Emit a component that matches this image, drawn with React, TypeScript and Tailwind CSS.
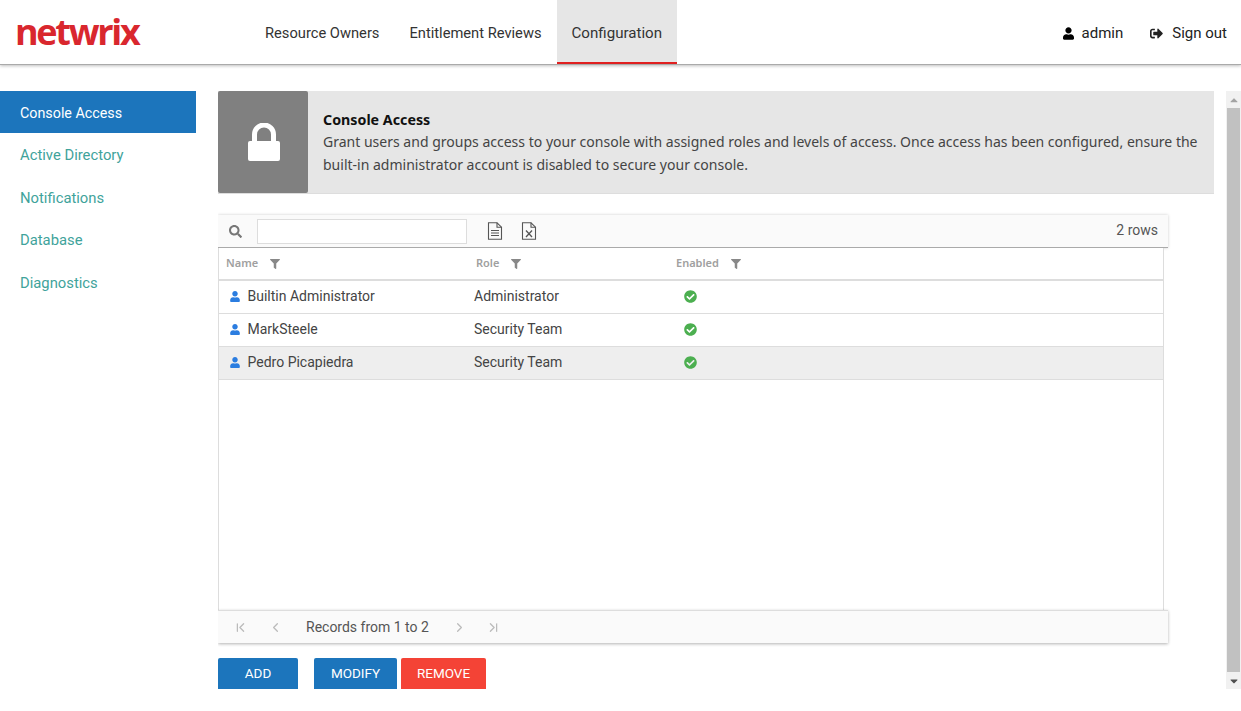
import React from 'react'
import { FaUser, FaSignOutAlt, FaSearch, FaFilter, FaCheckCircle, FaCaretUp, FaCaretDown } from 'react-icons/fa'
import { ChevronFirst, ChevronLast, ChevronLeft, ChevronRight } from 'lucide-react'

const ROWS = [
  { name: 'Builtin Administrator', role: 'Administrator', selected: false },
  { name: 'MarkSteele', role: 'Security Team', selected: false },
  { name: 'Pedro Picapiedra', role: 'Security Team', selected: true },
]

const SIDE_LINKS = ['Active Directory', 'Notifications', 'Database', 'Diagnostics']

function FileIcon({ excel }: { excel?: boolean }) {
  return (
    <svg width="16" height="18" viewBox="0 0 16 18" fill="none" stroke="#555" strokeWidth="1.1">
      <path d="M1.5 0.8H10L14.5 5.2V17.2H1.5Z" />
      <path d="M10 0.8V5.2H14.5" />
      {excel ? (
        <path d="M5 8.5L11 15M11 8.5L5 15" strokeWidth="1.3" />
      ) : (
        <path d="M4 8.5H12M4 11H12M4 13.5H12" />
      )}
    </svg>
  )
}

function LockIcon() {
  return (
    <svg className="ml-[1px]" width="32" height="38" viewBox="0 0 32 38" fill="white">
      <path d="M6.5 20V11.5a9.5 9.5 0 0 1 19 0V20" fill="none" stroke="white" strokeWidth="5" />
      <rect x="0" y="18" width="32" height="20" rx="2" />
    </svg>
  )
}

function HeaderCell({ label }: { label: string }) {
  return (
    <div className="flex items-center gap-[12px] text-[11px] font-semibold text-[#a0a0a0] font-['Noto_Sans',sans-serif]">
      {label}
      <FaFilter className="w-[10px] h-[10px] text-[#888]" />
    </div>
  )
}

export default function App() {
  return (
    <div className="w-[1241px] h-[711px] overflow-hidden bg-white flex flex-col font-['Roboto',sans-serif] text-[#333]">
      {/* Top bar */}
      <header className="h-[65px] shrink-0 flex border-b border-[#aaa] shadow-[0_1px_3px_rgba(0,0,0,0.25)]">
        <div className="w-[250px] pl-[15px] pt-[8px] shrink-0">
          <span className="text-[36px] leading-[48px] font-bold tracking-[-2.3px] text-[#d9272e] font-['Open_Sans',sans-serif]">
            netwrix
          </span>
        </div>
        <nav className="flex text-[14.7px] text-[#333]">
          <a className="px-[15px] pt-[2px] h-full flex items-center">Resource Owners</a>
          <a className="px-[15px] pt-[2px] h-full flex items-center">Entitlement Reviews</a>
          <a className="px-[15px] pt-[4px] h-full flex items-center bg-[#e6e6e6] border-b-2 border-[#e02020] text-[15.1px]">Configuration</a>
        </nav>
        <div className="ml-auto flex items-center pr-[14px] pt-[2px] text-[15px] text-[#222]">
          <FaUser className="w-[11px] h-[13px] text-black mr-[8px]" />
          <span>admin</span>
          <FaSignOutAlt className="w-[13px] h-[13px] text-[#222] ml-[27px] mr-[9px]" />
          <span>Sign out</span>
        </div>
      </header>

      {/* Body */}
      <div className="flex pt-[26px] h-[624px]">
        <aside className="w-[196px] shrink-0 text-[14.8px] text-[#3fa39b]">
          <div className="h-[42px] pl-[20px] pt-[3px] flex items-center bg-[#1c75bc] text-white text-[14.3px]">Console Access</div>
          {SIDE_LINKS.map((link) => (
            <div key={link} className="h-[42.5px] pl-[20px] pt-[2px] flex items-center">{link}</div>
          ))}
        </aside>

        <main className="ml-[22px] w-[996px] h-[598px] shrink-0 overflow-hidden">
          <section className="h-[103px] flex bg-[#e6e6e6] border-b border-[#ddd]">
            <div className="w-[90px] shrink-0 bg-[#808080] rounded-[2px] flex items-center justify-center">
              <LockIcon />
            </div>
            <div className="pl-[15px] pr-[12px] pt-[17px] text-[14.03px] leading-[23px] font-['Noto_Sans',sans-serif] text-[#444]">
              <div className="font-bold text-[#111] text-[14.25px] mb-[-1px]">Console Access</div>
              <p>
                Grant users and groups access to your console with assigned roles and levels of access. Once access has been configured, ensure the built-in administrator account is disabled to secure your console.
              </p>
            </div>
          </section>

          <section className="mt-[21px] w-[950px]">
            <div className="h-[33px] flex items-center bg-[#fafafa] border-b border-[#aaa] shadow-[0_0_3px_rgba(0,0,0,0.2)]">
              <FaSearch className="w-[13px] h-[13px] text-[#777] ml-[11px]" />
              <input className="ml-[15px] w-[210px] h-[25px] bg-white border border-[#ddd]" />
              <div className="ml-[20px]"><FileIcon /></div>
              <div className="ml-[18px]"><FileIcon excel /></div>
              <span className="ml-auto pr-[10px] pb-[1px] text-[14px] text-[#555]">2 rows</span>
            </div>

            <div className="w-[946px] h-[362px] border-l border-r border-[#ddd] bg-white flex flex-col">
              <div className="h-[33px] shrink-0 pl-[7px] grid grid-cols-[250px_200px_1fr] items-center border-b-2 border-[#ddd]">
                <HeaderCell label="Name" />
                <HeaderCell label="Role" />
                <HeaderCell label="Enabled" />
              </div>
              {ROWS.map((row) => (
                <div
                  key={row.name}
                  className={`h-[33px] shrink-0 pl-[11px] pb-[1px] grid grid-cols-[244px_210px_1fr] items-center border-b border-[#ddd] text-[14px] text-[#444] ${row.selected ? 'bg-[#eeeeee]' : ''}`}
                >
                  <div className="flex items-center gap-[7.5px]">
                    <FaUser className="w-[10px] h-[11px] text-[#2b7de0]" />
                    {row.name}
                  </div>
                  <div>{row.role}</div>
                  <FaCheckCircle className="w-[13px] h-[13px] text-[#4caf50]" />
                </div>
              ))}
            </div>

            <div className="h-[33px] flex items-center bg-[#fafafa] border-t border-[#ddd] shadow-[0_1px_3px_rgba(0,0,0,0.3)] text-[#bbb]">
              <ChevronFirst className="w-[15px] h-[15px] ml-[15px]" />
              <ChevronLeft className="w-[15px] h-[15px] ml-[20px]" />
              <span className="ml-[23px] text-[14px] text-[#555]">Records from 1 to 2</span>
              <ChevronRight className="w-[15px] h-[15px] ml-[23px]" />
              <ChevronLast className="w-[15px] h-[15px] ml-[19px]" />
            </div>
          </section>

          <div className="mt-[15px] flex text-[13.5px] text-white">
            <button className="w-[80px] h-[40px] pb-[9px] bg-[#1c75bc] rounded-[2px]">ADD</button>
            <button className="ml-[16px] w-[83px] h-[40px] pb-[9px] bg-[#1c75bc] rounded-[2px]">MODIFY</button>
            <button className="ml-[4px] w-[85px] h-[40px] pb-[9px] bg-[#f44336] rounded-[2px]">REMOVE</button>
          </div>
        </main>

        {/* Scrollbar */}
        <div className="ml-[12px] w-[15px] h-[598px] shrink-0 bg-[#f1f1f1] flex flex-col items-center">
          <div className="h-[17px] flex items-center justify-center"><FaCaretUp className="w-[12px] h-[12px] text-[#a3a3a3]" /></div>
          <div className="w-[13px] flex-1 bg-[#c1c1c1]" />
          <div className="h-[17px] flex items-center justify-center"><FaCaretDown className="w-[12px] h-[12px] text-[#505050]" /></div>
        </div>
      </div>
    </div>
  )
}
